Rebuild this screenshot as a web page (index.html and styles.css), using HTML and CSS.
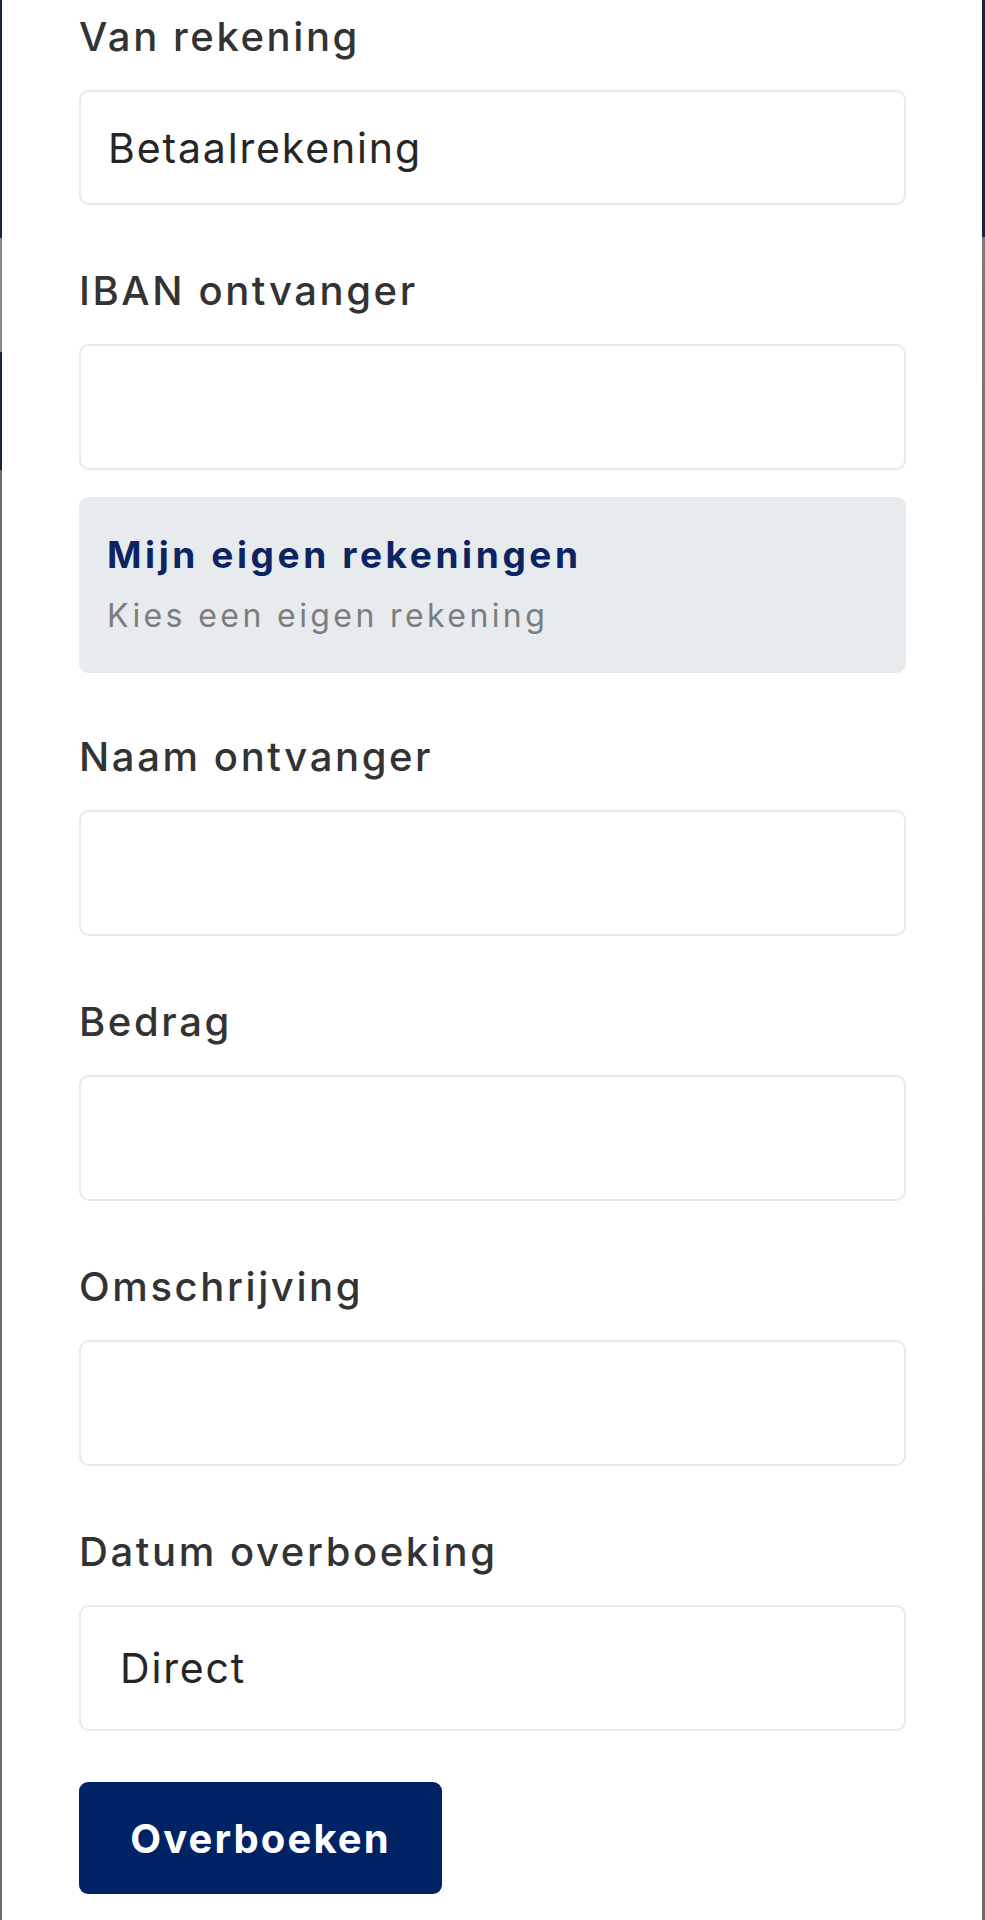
FILE: index.html
```html
<!DOCTYPE html>
<html lang="nl">
<head>
<meta charset="utf-8">
<title>Overboeken</title>
<link rel="stylesheet" href="styles.css">
</head>
<body>
<div class="edge edge-left"></div>
<div class="edge edge-right"></div>
<form class="transfer">
  <div class="field field-first">
    <label class="label">Van rekening</label>
    <div class="box box-select">Betaalrekening</div>
  </div>
  <div class="field field-suggest">
    <label class="label">IBAN ontvanger</label>
    <div class="box"></div>
  </div>
  <div class="suggest">
    <div class="suggest-title">Mijn eigen rekeningen</div>
    <div class="suggest-sub">Kies een eigen rekening</div>
  </div>
  <div class="field">
    <label class="label">Naam ontvanger</label>
    <div class="box"></div>
  </div>
  <div class="field">
    <label class="label">Bedrag</label>
    <div class="box"></div>
  </div>
  <div class="field">
    <label class="label">Omschrijving</label>
    <div class="box"></div>
  </div>
  <div class="field field-last">
    <label class="label">Datum overboeking</label>
    <div class="box box-date">Direct</div>
  </div>
  <button type="button" class="submit">Overboeken</button>
</form>
</body>
</html>
```

FILE: styles.css
```css
html, body {
  margin: 0;
  padding: 0;
  background: #ffffff;
}

body {
  font-family: Inter, "Open Sans", "Liberation Sans", sans-serif;
  color: #333333;
  position: relative;
  min-height: 1920px;
}

.edge {
  position: absolute;
  top: 0;
  width: 2px;
  height: 1920px;
}

.edge-left {
  left: 0;
  background: linear-gradient(to bottom,
    #17243f 0, #17243f 238px,
    #8a8a8a 238px, #8a8a8a 352px,
    #17243f 352px, #17243f 470px,
    #6e6e6e 470px, #6e6e6e 100%);
}

.edge-right {
  right: 0;
  width: 3px;
  background: linear-gradient(to bottom,
    #17243f 0, #17243f 237px,
    #7a7a7a 237px, #6a6a6a 100%);
}

.transfer {
  display: flex;
  flex-direction: column;
  padding: 12px 79px 0;
}

.field {
  display: flex;
  flex-direction: column;
  gap: 28px;
  margin-bottom: 61px;
}

.field-suggest {
  margin-bottom: 27px;
}

.field-last {
  margin-bottom: 51px;
}

.label {
  font-size: 40px;
  line-height: 50px;
  font-weight: 500;
  letter-spacing: 2.6px;
  color: #333333;
}

.box {
  box-sizing: border-box;
  height: 126px;
  border: 2px solid #e7e9ec;
  border-radius: 10px;
  background: #ffffff;
  display: flex;
  align-items: center;
  font-size: 41px;
  font-weight: 400;
  letter-spacing: 1.85px;
  color: #262626;
  padding-left: 27px;
}

.box-select {
  height: 115px;
}

.box-date {
  padding-left: 39px;
}

.suggest {
  box-sizing: border-box;
  height: 176px;
  background: #e8ebee;
  border-radius: 9px;
  padding: 35px 28px 35px;
  margin-bottom: 59px;
}

.suggest-title {
  font-size: 37px;
  line-height: 45px;
  font-weight: 700;
  letter-spacing: 3.6px;
  color: #0c2461;
}

.suggest-sub {
  margin-top: 19px;
  font-size: 32px;
  line-height: 40px;
  font-weight: 400;
  letter-spacing: 3.4px;
  color: #7b7d80;
}

.submit {
  align-self: flex-start;
  box-sizing: border-box;
  width: 363px;
  height: 112px;
  border: none;
  border-radius: 9px;
  background: #002366;
  color: #ffffff;
  font-family: Inter, "Open Sans", "Liberation Sans", sans-serif;
  font-size: 40px;
  font-weight: 700;
  letter-spacing: 2.1px;
  padding: 0;
}
```
